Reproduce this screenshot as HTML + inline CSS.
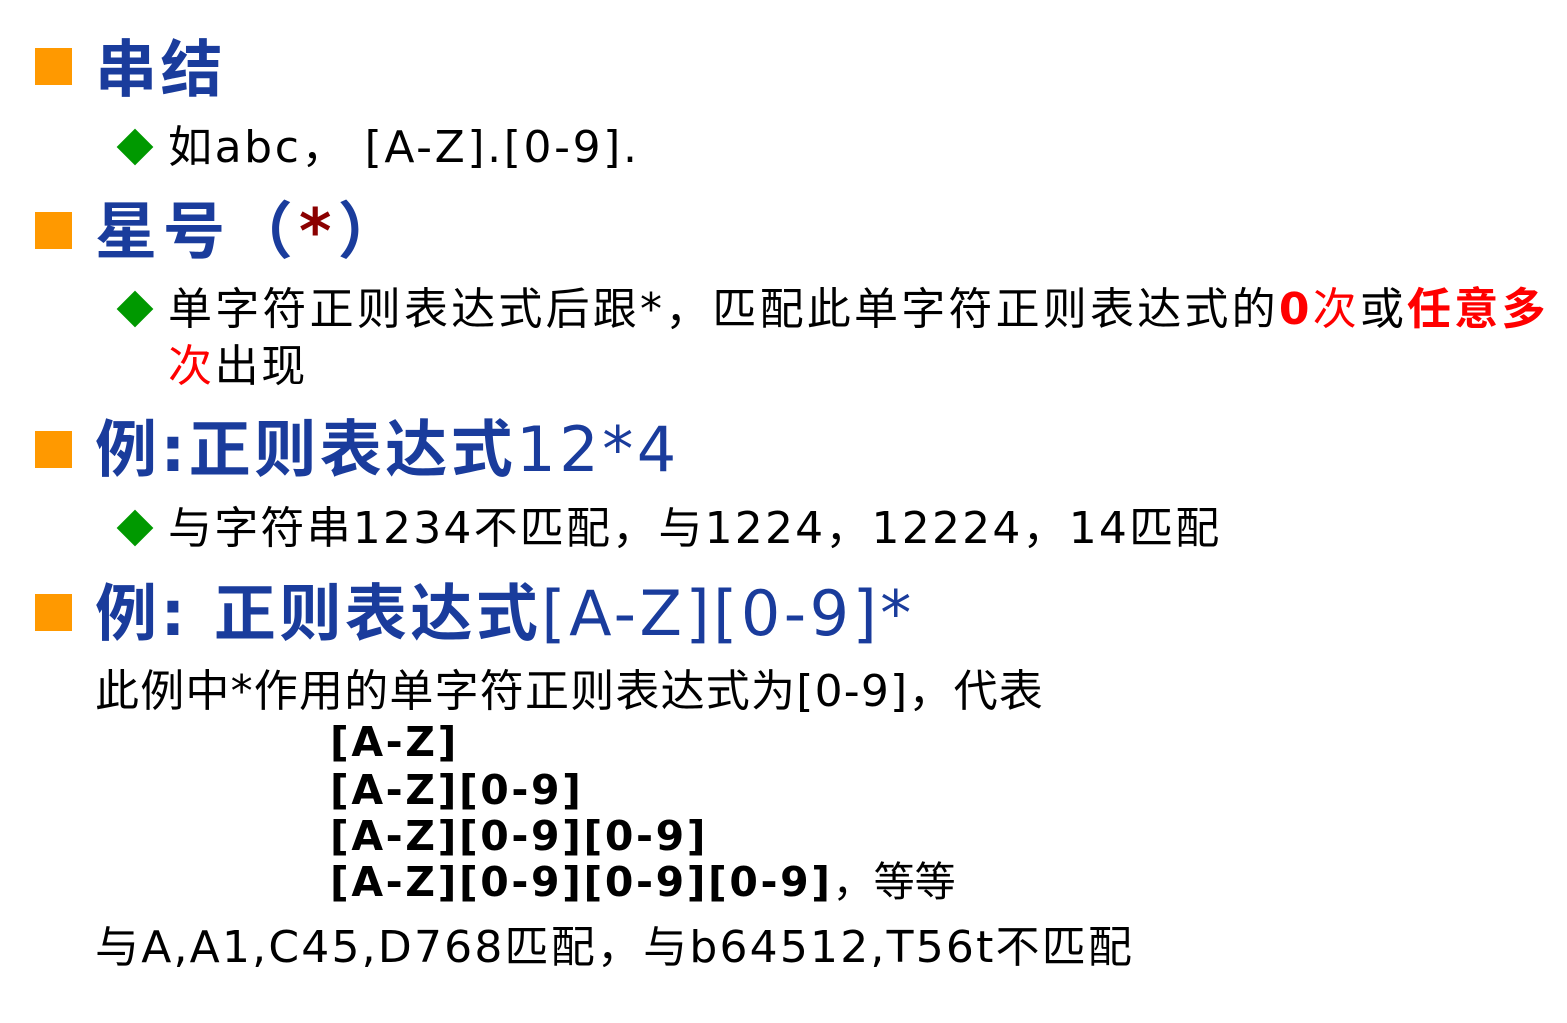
<!DOCTYPE html>
<html><head><meta charset="utf-8"><style>
body{margin:0;width:1567px;height:1023px;background:#fff;position:relative;overflow:hidden;font-family:"DejaVu Sans","Noto Sans CJK SC",sans-serif;color:#000}
.a{position:absolute;white-space:nowrap;line-height:1}
.sq{position:absolute;left:35px;width:37px;height:37px;background:#ff9900}
.dm{position:absolute;left:122px;width:26px;height:26px;background:#009900;transform:rotate(45deg)}
.h{font-size:62px;font-weight:bold;color:#1a3c9c;left:95px;letter-spacing:3.5px}
.h .n{font-weight:normal}
.s{font-size:44px;left:168px;letter-spacing:2.6px}
.r{color:#f00;font-weight:bold}
.m{font-size:41px;font-weight:bold;left:330px;letter-spacing:2.6px}
</style></head><body>
<div class="sq" style="top:48px"></div>
<div class="a h" style="top:39px">串结</div>
<div class="dm" style="top:134px"></div>
<div class="a s" style="top:126px">如abc， [A-Z].[0-9].</div>

<div class="sq" style="top:212px"></div>
<div class="a h" style="top:201px;letter-spacing:6px">星号（<span style="color:#8b0000">*</span>）</div>
<div class="dm" style="top:296px"></div>
<div class="a s" style="top:288px;letter-spacing:3.2px">单字符正则表达式后跟*，匹配此单字符正则表达式的<span class="r">0</span><span style="color:#f00">次</span>或<span class="r">任意多</span></div>
<div class="a s" style="top:345px"><span style="color:#f00">次</span>出现</div>

<div class="sq" style="top:431px"></div>
<div class="a h" style="top:419px">例:正则表达式<span class="n">12*4</span></div>
<div class="dm" style="top:515px"></div>
<div class="a s" style="top:507px;letter-spacing:2.2px">与字符串1234不匹配，与1224，12224，14匹配</div>

<div class="sq" style="top:594px"></div>
<div class="a h" style="top:583px">例: 正则表达式<span class="n">[A-Z][0-9]*</span></div>
<div class="a s" style="top:670px;left:95px;letter-spacing:1.2px">此例中*作用的单字符正则表达式为[0-9]，代表</div>
<div class="a m" style="top:722px">[A-Z]</div>
<div class="a m" style="top:770px">[A-Z][0-9]</div>
<div class="a m" style="top:816px">[A-Z][0-9][0-9]</div>
<div class="a m" style="top:862px">[A-Z][0-9][0-9][0-9]<span style="font-weight:normal;letter-spacing:0">，等等</span></div>
<div class="a s" style="top:926px;left:95px;letter-spacing:2.2px">与A,A1,C45,D768匹配，与b64512,T56t不匹配</div>
</body></html>
